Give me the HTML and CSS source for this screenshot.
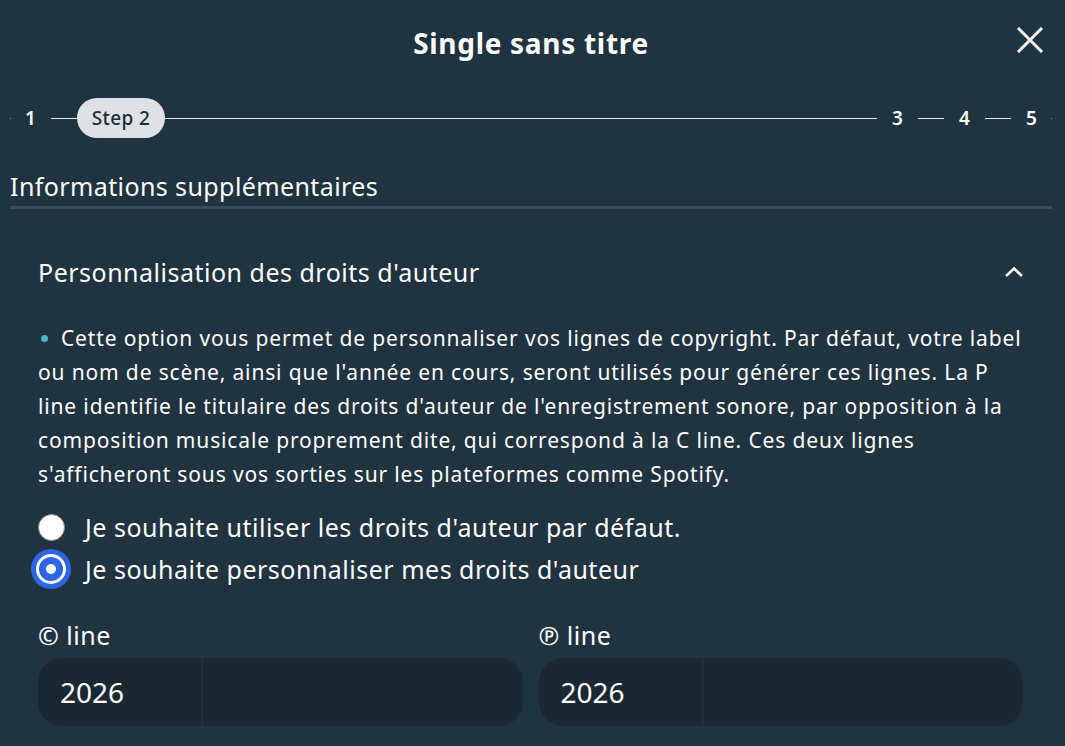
FILE: index.html
```html
<!DOCTYPE html>
<html lang="fr">
<head>
<meta charset="utf-8">
<title>Single sans titre</title>
<link rel="stylesheet" href="styles.css">
</head>
<body>
<div class="modal">
  <header class="modal-header">
    <h1 class="modal-title">Single sans titre</h1>
    <button class="close-btn" aria-label="Fermer">
      <svg width="26" height="26" viewBox="0 0 26 26"><path d="M2 2 L24 24 M24 2 L2 24" stroke="#fff" stroke-width="3" stroke-linecap="square" fill="none"/></svg>
    </button>
  </header>

  <nav class="stepper">
    <span class="tick"></span>
    <span class="step-num">1</span>
    <span class="connector"></span>
    <span class="step-pill">Step 2</span>
    <span class="connector grow"></span>
    <span class="step-num">3</span>
    <span class="connector"></span>
    <span class="step-num">4</span>
    <span class="connector"></span>
    <span class="step-num">5</span>
    <span class="tick"></span>
  </nav>

  <h2 class="section-title">Informations supplémentaires</h2>

  <section class="accordion">
    <div class="acc-header">
      <span class="acc-title">Personnalisation des droits d'auteur</span>
      <svg class="chevron" width="20" height="12" viewBox="0 0 20 12"><path d="M2 10 L10 2.5 L18 10" stroke="#fff" stroke-width="2.6" fill="none"/></svg>
    </div>
    <div class="acc-body">
      <p class="info"><span class="bullet"></span>Cette option vous permet de personnaliser vos lignes de copyright. Par défaut, votre label ou nom de scène, ainsi que l'année en cours, seront utilisés pour générer ces lignes. La P<br>line identifie le titulaire des droits d'auteur de l'enregistrement sonore, par opposition à la composition musicale proprement dite, qui correspond à la C line. Ces deux lignes s'afficheront sous vos sorties sur les plateformes comme Spotify.</p>

      <div class="radios">
        <label class="radio-row"><span class="radio-box"><span class="radio"></span></span>Je souhaite utiliser les droits d'auteur par défaut.</label>
        <label class="radio-row"><span class="radio-box"><span class="radio checked"></span></span>Je souhaite personnaliser mes droits d'auteur</label>
      </div>

      <div class="fields">
        <div class="field">
          <div class="field-label">© line</div>
          <div class="field-input">
            <span class="year">2026</span>
            <span class="owner"></span>
          </div>
        </div>
        <div class="field">
          <div class="field-label">℗ line</div>
          <div class="field-input">
            <span class="year">2026</span>
            <span class="owner"></span>
          </div>
        </div>
      </div>
    </div>
  </section>
</div>
</body>
</html>
```

FILE: styles.css
```css
* { box-sizing: border-box; }
html, body { margin: 0; height: 100%; }
body {
  background: #203341;
  color: #ffffff;
  font-family: "Noto Sans", "Open Sans", sans-serif;
  overflow: hidden;
}
.modal {
  padding: 0 13px 0 10px;
}
.modal-header {
  height: 86px;
  display: flex;
  align-items: center;
  justify-content: center;
  position: relative;
}
.modal-title {
  margin: 0;
  font-size: 28px;
  font-weight: 700;
  letter-spacing: 0.7px;
}
.close-btn {
  position: absolute;
  right: 9px;
  top: 27px;
  background: none;
  border: 0;
  padding: 0;
  width: 26px;
  height: 26px;
  cursor: pointer;
}
.close-btn svg { display: block; }

.stepper {
  margin-top: 12px;
  height: 40px;
  display: flex;
  align-items: center;
}
.tick {
  width: 1px;
  height: 1px;
  margin-right: -1px;
  background: #8a96a0;
}
.tick:last-child { margin: 0 0 0 -1px; }
.step-num {
  width: 41px;
  text-align: center;
  font-size: 19px;
  font-weight: 600;
  line-height: 40px;
}
.connector {
  width: 26px;
  height: 1px;
  background: #e8ecee;
}
.connector.grow { flex: 1; }
.step-pill {
  height: 40px;
  width: 88px;
  justify-content: center;
  border-radius: 20px;
  background: #dfe2e4;
  color: #1d2c37;
  font-size: 19px;
  font-weight: 500;
  letter-spacing: 0.4px;
  display: flex;
  align-items: center;
}

.section-title {
  margin: 32px 0 0;
  font-size: 25px;
  line-height: 32px;
  font-weight: 400;
  letter-spacing: 0.4px;
  padding-bottom: 4px;
  border-bottom: 3px solid #3a4c57;
}

.accordion {
  margin-top: 23px;
  padding: 0 28px;
}
.acc-header {
  height: 80px;
  display: flex;
  align-items: center;
  justify-content: space-between;
}
.acc-title {
  font-size: 25px;
  line-height: 32px;
  letter-spacing: 0.5px;
}
.chevron { display: block; }

.acc-body { padding-top: 9px; }
.info {
  margin: 0;
  font-size: 21px;
  letter-spacing: 0.85px;
  line-height: 34px;
}
.bullet {
  display: inline-block;
  width: 7px;
  height: 7px;
  border-radius: 50%;
  background: #4eb3c9;
  vertical-align: middle;
  margin: -3px 13px 0 3px;
}

.radios {
  margin-top: 15px;
  display: flex;
  flex-direction: column;
}
.radio-row {
  display: flex;
  align-items: center;
  gap: 14px;
  height: 42px;
  font-size: 25px;
  letter-spacing: 0.5px;
  margin-left: -7px;
}
.radio-box {
  width: 40px;
  height: 40px;
  display: flex;
  align-items: center;
  justify-content: center;
}
.radio {
  width: 27px;
  height: 27px;
  border-radius: 50%;
  background: #ffffff;
  border: 1px solid #8d8d8d;
}
.radio.checked {
  position: relative;
  width: 30px;
  height: 30px;
  background: #2c66e4;
  border: 3px solid #ffffff;
  box-shadow: 0 0 0 5px #2c66e4;
}
.radio.checked::after {
  content: "";
  position: absolute;
  left: 50%;
  top: 50%;
  width: 10px;
  height: 10px;
  margin: -5px 0 0 -5px;
  border-radius: 50%;
  background: #ffffff;
}

.fields {
  margin-top: 29px;
  display: grid;
  grid-template-columns: 1fr 1fr;
  gap: 16px;
  margin-right: 1px;
}
.field-label {
  font-size: 25px;
  line-height: 32px;
  letter-spacing: 0.5px;
}
.field-input {
  margin-top: 7px;
  height: 68px;
  border-radius: 24px;
  background: #1a2833;
  display: flex;
  overflow: hidden;
}
.year {
  width: 165px;
  font-size: 28px;
  display: flex;
  align-items: center;
  padding-left: 22px;
  border-right: 2px solid #1f303c;
}
.owner { flex: 1; }
```
